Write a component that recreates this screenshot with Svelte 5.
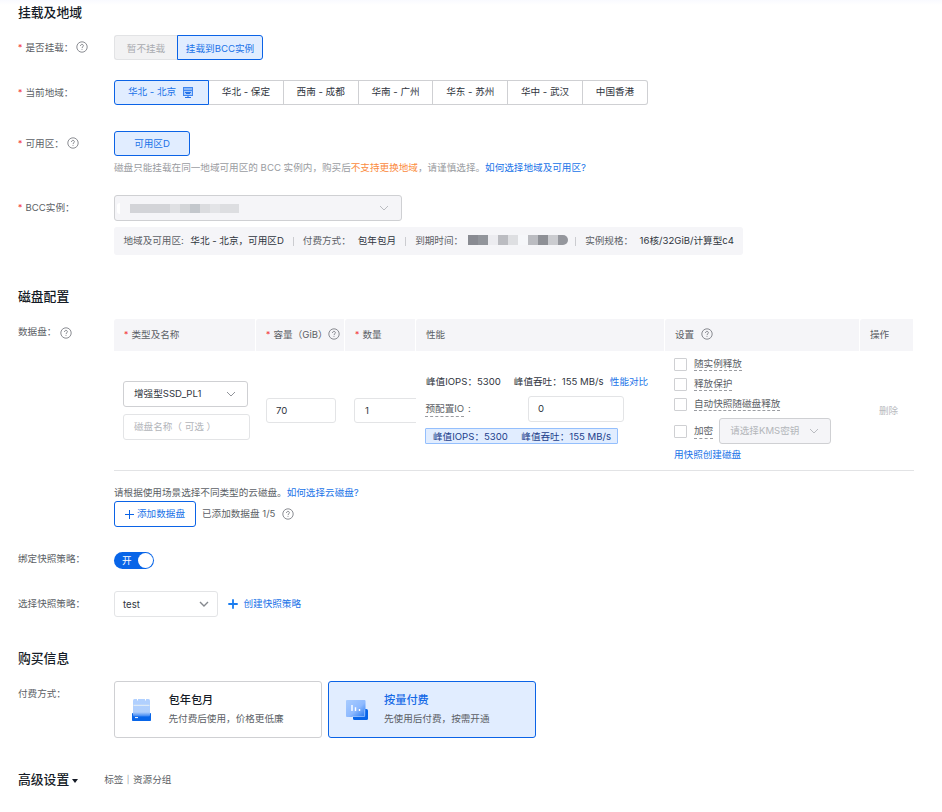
<script>
  const regions = ['华北 - 保定', '西南 - 成都', '华南 - 广州', '华东 - 苏州', '华中 - 武汉'];
  const options = ['随实例释放', '释放保护', '自动快照随磁盘释放'];
  const nameMask = [
    [40, '#d3d4d8'], [10, '#dfe0e3'], [10, '#d3d5d8'], [10, '#c3c7cc'], [10, '#dbdcdf'], [10, '#e3e4e7'], [19, '#dddee1']
  ];
  const dateMask = [
    [10, '#898b92'], [10, '#92959b'], [10, '#ececf0'], [10, '#bbbcc1'], [10, '#dedfe2'], [10, '#f6f7fa'],
    [10, '#bbbcc1'], [10, '#8e9096'], [10, '#cbccd0'], [10, '#95979d']
  ];
</script>

{#snippet help()}
  <svg class="help" width="12" height="12" viewBox="0 0 12 12" fill="none" stroke="#6d7077" stroke-width=".8">
    <circle cx="6" cy="6" r="5.2" />
    <path d="M4.5 4.9C4.5 2.8 7.5 2.9 7.4 4.8C7.4 5.8 6 5.8 6 7M6 7.9V8.8" />
  </svg>
{/snippet}

{#snippet chevron()}
  <svg class="chev" width="10" height="8" viewBox="0 0 10 8" fill="none" stroke="currentColor"><path d="M1 2L5 6L9 2" /></svg>
{/snippet}

<div class="page">
  <h2 class="first">挂载及地域</h2>

  <div class="row" style:height="45px">
    <div class="label"><i class="star">*</i><span class="name4">是否挂载：</span><span class="q1">{@render help()}</span></div>
    <div class="seg">
      <button class="off">暂不挂载</button>
      <button class="on">挂载到BCC实例</button>
    </div>
  </div>

  <div class="row" style:height="51px">
    <div class="label"><i class="star">*</i>当前地域：</div>
    <div class="regions">
      <button class="on">华北 - 北京
        <svg width="12" height="12" viewBox="0 0 12 12" fill="none" stroke="#3f86f0">
          <rect x="1.5" y=".5" width="9" height="3" fill="#8ab8fa" />
          <rect x="1.5" y="3.500" width="9" height="5" fill="#a9cbfc" />
          <path d="M3 5.500H9M4 6.500H8M6 8.500V11M3 10.500H9" stroke="#2573ea" />
        </svg>
      </button>
      {#each regions as r}<button>{r}</button>{/each}
      <button class="last">中国香港</button>
    </div>
  </div>

  <div class="row" style:height="64px">
    <div class="label"><i class="star">*</i>可用区：<span class="q1 up">{@render help()}</span></div>
    <div>
      <button class="zone">可用区D</button>
      <p class="note">磁盘只能挂载在同一地域可用区的 BCC 实例内，购买后<b>不支持更换地域</b>，请谨慎选择。<a href="#zone">如何选择地域及可用区?</a></p>
    </div>
  </div>

  <div class="row" style:height="84px">
    <div class="label l26"><i class="star">*</i>BCC实例：</div>
    <div>
      <div class="select instance">
        <span class="nick"></span>
        <span class="mask">{#each nameMask as [w, c]}<i style:width="{w}px" style:background={c}></i>{/each}</span>
        {@render chevron()}
      </div>
      <div class="info">
        <span class="k">地域及可用区:</span><span class="v v1">华北 - 北京，可用区D</span><i class="bar"></i>
        <span class="k">付费方式：</span><span class="v v2">包年包月</span><i class="bar"></i>
        <span class="k">到期时间：</span>
        <span class="mask date">{#each dateMask as [w, c]}<i style:width="{w}px" style:background={c}></i>{/each}</span>
        <i class="bar b3"></i><span class="k">实例规格：</span><span class="v v3">16核/32GiB/计算型c4</span>
      </div>
    </div>
  </div>

  <h2>磁盘配置</h2>

  <div class="row" style:height="233px">
    <div class="label">数据盘：<span class="q2">{@render help()}</span></div>
    <div>
      <div class="grid head">
        <div><i class="star">*</i>类型及名称</div>
        <div><i class="star">*</i>容量（GiB）<span class="q3">{@render help()}</span></div>
        <div><i class="star">*</i>数量</div>
        <div>性能</div>
        <div>设置<span class="q4">{@render help()}</span></div>
        <div>操作</div>
      </div>
      <div class="grid body">
        <div class="c1">
          <div class="select type"><span>增强型SSD_PL1</span>{@render chevron()}</div>
          <div class="input name">磁盘名称（ 可选 ）</div>
        </div>
        <div class="c2"><div class="input cap">70</div></div>
        <div class="c3"><div class="input qty">1</div></div>
        <div class="c4">
          <div class="perf"><span class="p1">峰值IOPS：5300</span><span class="p2">峰值吞吐：155 MB/s</span><a href="#perf">性能对比</a></div>
          <div class="pre"><span class="dash">预配置IO</span><span class="colon">:</span><div class="input io">0</div></div>
          <div class="badge"><span class="p1">峰值IOPS：5300</span><span>峰值吞吐：155 MB/s</span></div>
        </div>
        <div class="c5">
          {#each options as o}
            <div class="opt"><i class="box"></i><span class="dash">{o}</span></div>
          {/each}
          <div class="opt enc"><i class="box"></i><span class="dash">加密</span>
            <div class="select kms"><span>请选择KMS密钥</span>{@render chevron()}</div>
          </div>
          <a href="#snap">用快照创建磁盘</a>
        </div>
        <div class="c6">删除</div>
      </div>
      <p class="tip">请根据使用场景选择不同类型的云磁盘。<a href="#disk">如何选择云磁盘?</a></p>
      <div class="addline">
        <button class="add">
          <svg width="9" height="9" viewBox="0 0 9 9" stroke="#0b63e6"><path d="M4.5 0V9M0 4.5H9" /></svg>添加数据盘
        </button>
        <span>已添加数据盘 1/5</span>
        {@render help()}
      </div>
    </div>
  </div>

  <div class="row" style:height="39px">
    <div class="label l13">绑定快照策略：</div>
    <div class="toggle"><span>开</span><i></i></div>
  </div>

  <div class="row" style:height="50px">
    <div class="label l26">选择快照策略：</div>
    <div class="select policy"><span>test</span>{@render chevron()}</div>
    <a class="create" href="#policy">
      <svg width="10" height="10" viewBox="0 0 10 10" stroke="#1a7df0" stroke-width="1.8"><path d="M5 .3V9.700M.3 5H9.700" /></svg>创建快照策略
    </a>
  </div>

  <h2>购买信息</h2>

  <div class="row" style:height="81px">
    <div class="label">付费方式：</div>
    <div class="cards">
      <div class="card">
        <svg width="20" height="24" viewBox="0 0 20 24">
          <defs>
            <linearGradient id="cal" x1="0" y1="0" x2="0" y2="1"><stop offset="0" stop-color="#b0d0ff" /><stop offset=".75" stop-color="#b0cffc" /><stop offset="1" stop-color="#3683f3" /></linearGradient>
          </defs>
          <rect x="0" y="15" width="19" height="8" rx=".8" fill="#0865e8" />
          <rect x="1" y="1" width="17" height="17.500" rx="1.500" fill="url(#cal)" />
          <path d="M1.500 7.300H17.500" stroke="#e9f1f4" />
          <path d="M5.500 .5V2.500M13.500 .5V2.500" stroke="#fff" />
          <path d="M3 19.600H6" stroke="#fff" />
        </svg>
        <div><h3>包年包月</h3><p>先付费后使用，价格更低廉</p></div>
      </div>
      <div class="card chosen">
        <svg width="23" height="24" viewBox="0 0 23 24">
          <defs>
            <linearGradient id="pane" x1="0" y1="0" x2="1" y2="1"><stop offset="0" stop-color="#a9ccff" /><stop offset=".55" stop-color="#8ebaff" /><stop offset="1" stop-color="#2175ee" /></linearGradient>
          </defs>
          <rect x="7" y="11" width="15" height="11" rx="1.5" fill="#0865e8" />
          <rect x="0" y="2" width="19.500" height="17" rx="1" fill="url(#pane)" />
          <path d="M6 18.500H18.500V11.500" fill="none" stroke="#9dc5ff" stroke-width=".7" />
          <path d="M6 7V13M9.500 9.300V13M13.500 11V13" stroke="#fff" stroke-width="1.4" />
        </svg>
        <div><h3>按量付费</h3><p>先使用后付费，按需开通</p></div>
      </div>
    </div>
  </div>

  <div class="adv">
    <h2>高级设置</h2><i class="tri"></i><span>标签｜资源分组</span>
  </div>
</div>

<style>
  :global(body) { background: #fff; }
  .page, .page * { box-sizing: border-box; }
  .page {
    width: 942px; height: 812px; overflow: hidden; padding-left: 18px;
    font: 9.6px/14px Inter, 'Noto Sans CJK SC', sans-serif; color: #5c5f66; white-space: nowrap;
    background: linear-gradient(#f9faff, #fff 5px);
  }
  h2, h3, p { margin: 0; }
  h2 { font-size: 12.8px; font-weight: 500; line-height: 35px; height: 40px; color: #151b26; }
  h2.first { line-height: 25px; height: 35px; }
  a { color: #2073e8; text-decoration: none; }
  i { font-style: normal; }
  svg { flex: none; display: block; }
  button { font: inherit; padding: 0; margin: 0; background: #fff; border: 1px solid #cfd0d3; color: #303540; height: 25px; display: flex; align-items: center; justify-content: center; }
  .row { display: flex; align-items: flex-start; }
  .label { width: 96px; flex: none; line-height: 25px; height: 25px; display: flex; align-items: center; }
  .l26 { line-height: 26px; height: 26px; }
  .l13 { line-height: 13px; height: 13px; }
  .star { color: #f33e3e; width: 7.500px; flex: none; font-size: 8.500px; line-height: 14px; }
  .q1 { margin-left: 3px; padding-bottom: 1px; }
  .up { padding-bottom: 2px; }
  .q2 { margin-left: 3.500px; padding-top: 2px; }
  .q3 { padding-bottom: 2px; }
  .q4 { margin-left: 7px; padding-bottom: 2px; }

  .seg, .regions { display: flex; }
  .seg .off { width: 63px; background: #f2f2f3; border-color: #e2e3e5; border-right: 0; color: #a9abb0; border-radius: 3px 0 0 3px; padding-top: 2px; }
  .seg .on { width: 86px; border-radius: 0 3px 3px 0; padding-top: 2px; }
  .on, .zone { background: #e1edff; border-color: #0b63e6; color: #2073e8; }
  .regions button { width: 74.800px; border-left: 0; padding-bottom: 2px; }
  .regions .on { width: 95px; border-left: 1px solid #0b63e6; border-radius: 3px 0 0 3px; gap: 6px; padding-right: 1px; }
  .regions .on svg { margin-top: 2px; }
  .regions .last { width: 65px; border-radius: 0 3px 3px 0; }
  .zone { width: 76px; border-radius: 3px; }
  .note { color: #9a9ca1; line-height: 14px; margin-top: 5px; }
  .note b { color: #fb8b3e; font-weight: 400; }

  .select { display: flex; align-items: center; justify-content: space-between; height: 26px; border: 1px solid #cfd0d3; border-radius: 3px; background: #fff; color: #303540; }
  .select .chev { color: #85888e; stroke-width: .9; }
  .select.instance { width: 288px; background: #f5f5f8; padding: 0 12px 0 2px; justify-content: flex-start; }
  .instance .chev { margin-left: auto; color: #b3b5ba; }
  .nick { width: 3px; height: 11px; background: #fff; border-radius: 3px 0 0 3px; margin-right: 10px; }
  .mask { display: flex; height: 9px; }
  .mask i { display: block; height: 100%; }
  .info { width: 629px; height: 28px; margin-top: 6px; background: #f5f5f8; border-radius: 3px; padding-left: 9.500px; display: flex; align-items: center; }
  .v { color: #303540; }
  .v1 { margin-left: 6.500px; }
  .v2 { margin-left: 7px; }
  .v3 { margin-left: 6.500px; }
  .bar { width: 1px; height: 9px; background: #cbccd0; margin: 0 9px; }
  .date { height: 10px; margin-bottom: 2px; border-radius: 0 5px 5px 0; overflow: hidden; margin-left: 5px; }
  .b3 { margin-left: 7px; }

  .grid { display: grid; grid-template-columns: 142px 89px 71px 249px 195px 54px; }
  .head { height: 32px; }
  .head > div { background: #f5f5f8; margin-right: 1px; padding-left: 10px; display: flex; align-items: center; border-top-left-radius: 3px; }
  .body { height: 120px; border-bottom: 1px solid #e2e3e5; }
  .c1 { padding: 30px 0 0 9px; }
  .type { width: 125px; padding: 0 11px 0 10px; }
  .input { height: 25px; line-height: 23px; border: 1px solid #e3e4e6; border-radius: 3px; background: #fff; color: #303540; }
  .name { width: 127px; height: 26px; margin-top: 7px; padding-left: 10px; color: #b3b5ba; }
  .c2 { padding: 47px 0 0 10px; }
  .cap { width: 70px; padding-left: 9px; }
  .c3 { padding: 47px 0 0 9px; overflow: hidden; }
  .qty { width: 80px; padding-left: 10px; }
  .c4 { padding: 23px 0 0 9px; }
  .perf { display: flex; height: 22px; line-height: 16px; color: #303540; padding-left: 1px; }
  .perf .p2 { margin-left: 13px; width: 96px; }
  .pre { display: flex; height: 26px; }
  .dash { height: 14px; border-bottom: 1px dashed #9a9ca1; }
  .pre .dash { margin-top: 6px; height: 15px; width: 39px; padding-left: .5px; }
  .colon { margin-top: 6px; width: 64px; padding-left: 4px; }
  .io { width: 96px; height: 26px; line-height: 24px; padding-left: 9px; }
  .badge { display: flex; justify-content: space-between; width: 193px; height: 16px; line-height: 15px; margin-top: 6px; padding: 0 6px 0 7px; background: #e1edff; border: 1px solid #94bffd; border-radius: 1px; color: #1c3f8c; }
  .c5 { padding: 5px 0 0 9px; }
  .opt { display: flex; height: 20px; }
  .box { width: 13px; height: 13px; margin: 2px 7px 0 0; border: 1px solid #cfd0d3; border-radius: 1px; background: #fff; }
  .opt .dash { height: 15px; line-height: 15px; }
  .enc { height: 29px; margin-top: 2px; align-items: center; padding-bottom: 3px; }
  .enc .box { margin-top: 0; }
  .enc .dash { line-height: 13px; }
  .kms { width: 112px; background: #f5f5f8; color: #b3b5ba; padding: 0 11px 0 10px; margin-left: 6px; }
  .select.kms .chev { color: #b3b5ba; }
  .c5 a { display: block; padding-top: 1px; }
  .c6 { padding: 53px 0 0 19px; color: #b9bbc0; }
  .tip { margin-top: 14px; height: 16px; line-height: 16px; }
  .addline { display: flex; align-items: center; height: 26px; }
  .add { width: 82px; height: 26px; border-color: #0b63e6; border-radius: 3px; color: #2073e8; gap: 3px; margin-right: 6px; }
  .addline .help { margin-left: 7px; }

  .toggle { width: 40px; height: 17px; border-radius: 9px; background: #0865e8; color: #fff; display: flex; align-items: center; justify-content: space-between; padding: 0 1px 0 8px; }
  .toggle i { width: 15px; height: 15px; border-radius: 50%; background: #fff; }
  .policy { width: 104px; padding: 0 8px 0 8px; border-color: #e3e4e6; }
  .policy span { padding-top: 1px; }
  .select.policy .chev { stroke-width: 1.4; }
  .create { display: flex; align-items: center; height: 26px; margin-left: 10px; gap: 5.500px; }

  .cards { display: flex; gap: 6px; }
  .card { width: 208px; height: 57px; border: 1px solid #cfd0d3; border-radius: 3px; display: flex; padding: 0 0 0 17px; background: #fff; }
  .card svg { margin-top: 16px; margin-right: 16.500px; }
  .card h3 { font-size: 11.2px; font-weight: 500; line-height: 16px; margin-top: 10px; color: #151b26; }
  .card p { line-height: 14px; margin-top: 4px; }
  .chosen { background: #e1edff; border-color: #0b63e6; }
  .card.chosen svg { margin-right: 15px; }
  .card.chosen h3 { color: #1469e6; }
  .adv { display: flex; align-items: center; height: 35px; }
  .adv h2 { height: 35px; }
  .tri { border: 3.500px solid transparent; border-top: 4px solid #151b26; border-bottom: 0; margin: 2px 26px 0 3px; }
</style>
